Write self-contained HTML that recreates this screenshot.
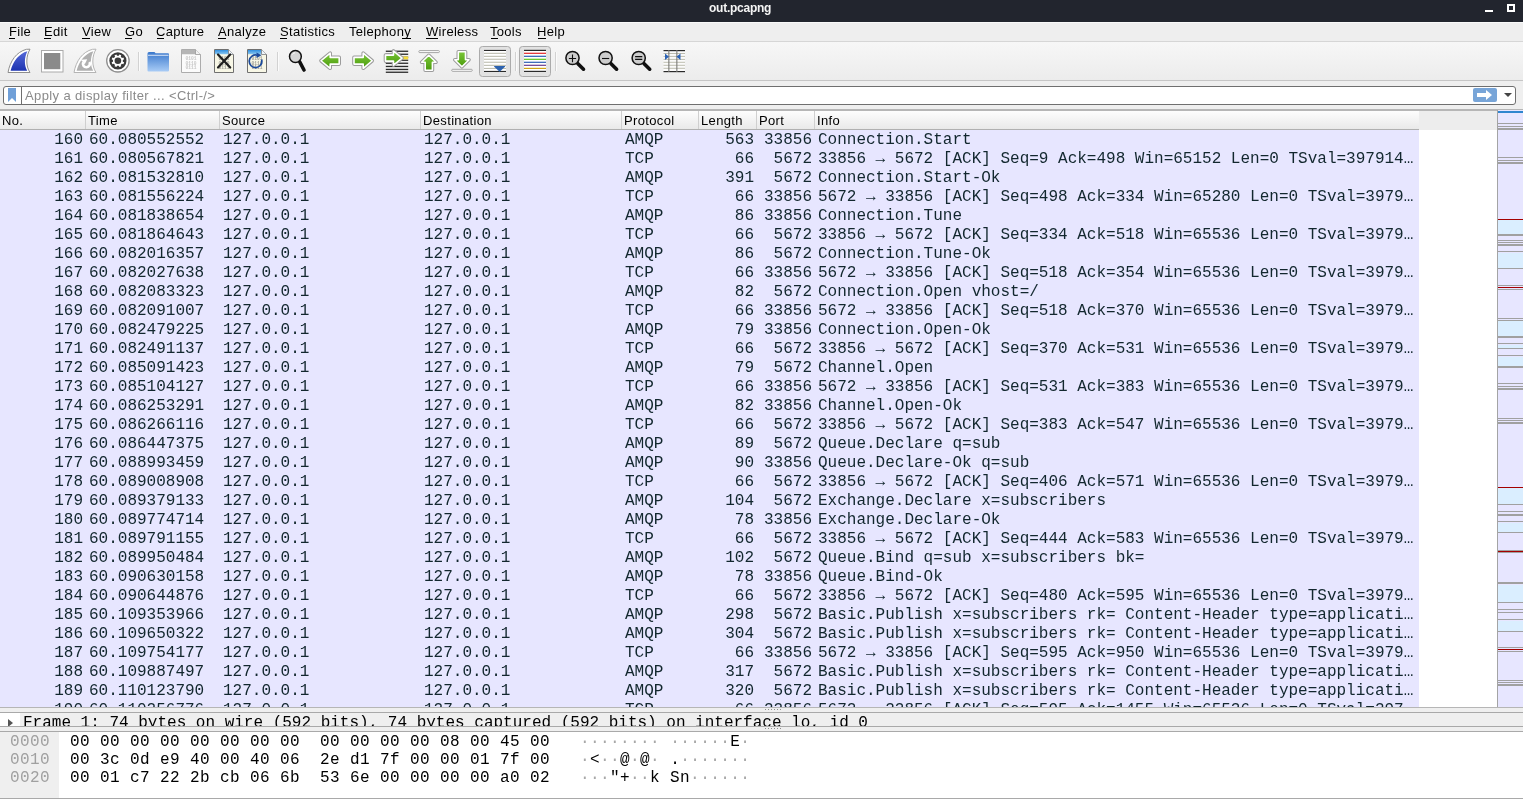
<!DOCTYPE html>
<html><head><meta charset="utf-8"><title>out.pcapng</title>
<style>
*{margin:0;padding:0;box-sizing:border-box}
html,body{width:1523px;height:799px;overflow:hidden;background:#efefef}
body{position:relative;font-family:"Liberation Sans",sans-serif;color:#000}
.a{position:absolute}
.mono{font-family:"Liberation Mono",monospace;font-size:16px;white-space:pre}
.ui{font-family:"Liberation Sans",sans-serif;font-size:13px;white-space:pre}
.menu span{position:absolute;top:0;}
.menu u{text-decoration:none;border-bottom:1px solid #000}
</style></head><body><div style="position:absolute;left:0;top:0;width:1523px;height:799px;overflow:hidden;will-change:transform">

<div class="a" style="left:0;top:0;width:1523px;height:22px;background:#22252e"></div>
<div class="a ui" style="left:709px;top:1px;font-size:12px;letter-spacing:-0.25px;font-weight:bold;color:#f4f4f4">out.pcapng</div>
<div class="a" style="left:1485px;top:10px;width:8px;height:2px;background:#fff"></div>
<div class="a" style="left:1507px;top:4px;width:8px;height:8px;border:2px solid #fff"></div>
<div class="a" style="left:0;top:22px;width:1523px;height:1px;background:#f9f9f9"></div>
<div class="a" style="left:0;top:23px;width:1523px;height:18px;background:#eeeeee"></div>
<div class="a" style="left:0;top:41px;width:1523px;height:1px;background:#d6d6d6"></div>
<div class="a ui" style="left:9px;top:24px;font-size:13px;letter-spacing:0.3px;color:#000">File</div>
<div class="a ui" style="left:44px;top:24px;font-size:13px;letter-spacing:0.3px;color:#000">Edit</div>
<div class="a ui" style="left:82px;top:24px;font-size:13px;letter-spacing:0.3px;color:#000">View</div>
<div class="a ui" style="left:125px;top:24px;font-size:13px;letter-spacing:0.3px;color:#000">Go</div>
<div class="a ui" style="left:156px;top:24px;font-size:13px;letter-spacing:0.3px;color:#000">Capture</div>
<div class="a ui" style="left:218px;top:24px;font-size:13px;letter-spacing:0.3px;color:#000">Analyze</div>
<div class="a ui" style="left:280px;top:24px;font-size:13px;letter-spacing:0.3px;color:#000">Statistics</div>
<div class="a ui" style="left:349px;top:24px;font-size:13px;letter-spacing:0.3px;color:#000">Telephony</div>
<div class="a ui" style="left:426px;top:24px;font-size:13px;letter-spacing:0.3px;color:#000">Wireless</div>
<div class="a ui" style="left:490px;top:24px;font-size:13px;letter-spacing:0.3px;color:#000">Tools</div>
<div class="a ui" style="left:537px;top:24px;font-size:13px;letter-spacing:0.3px;color:#000">Help</div>
<div class="a" style="left:9px;top:38px;width:6px;height:1px;background:#000"></div>
<div class="a" style="left:44px;top:38px;width:7px;height:1px;background:#000"></div>
<div class="a" style="left:82px;top:38px;width:8px;height:1px;background:#000"></div>
<div class="a" style="left:125px;top:38px;width:7px;height:1px;background:#000"></div>
<div class="a" style="left:157px;top:38px;width:7px;height:1px;background:#000"></div>
<div class="a" style="left:218px;top:38px;width:8px;height:1px;background:#000"></div>
<div class="a" style="left:280px;top:38px;width:7px;height:1px;background:#000"></div>
<div class="a" style="left:402px;top:38px;width:9px;height:1px;background:#000"></div>
<div class="a" style="left:426px;top:38px;width:12px;height:1px;background:#000"></div>
<div class="a" style="left:491px;top:38px;width:7px;height:1px;background:#000"></div>
<div class="a" style="left:538px;top:38px;width:8px;height:1px;background:#000"></div>
<div class="a" style="left:0;top:42px;width:1523px;height:38px;background:linear-gradient(#f7f7f7,#ececec)"></div>
<div class="a" style="left:0;top:80px;width:1523px;height:1px;background:#c6c6c6"></div>
<svg class="a" style="left:0;top:42px" width="700" height="38" viewBox="0 42 700 38">
<defs>
<linearGradient id="gblue" x1="0" y1="0" x2="0" y2="1"><stop offset="0" stop-color="#5468d8"/><stop offset="1" stop-color="#1c33b0"/></linearGradient>
<linearGradient id="gfold" x1="0" y1="0" x2="0" y2="1"><stop offset="0" stop-color="#3a78cc"/><stop offset="1" stop-color="#a9ccf6"/></linearGradient>
<linearGradient id="ggreen" x1="0" y1="0" x2="0" y2="1"><stop offset="0" stop-color="#7cc83a"/><stop offset="1" stop-color="#4a9a0c"/></linearGradient>
<linearGradient id="gdocb" x1="0" y1="0" x2="0" y2="1"><stop offset="0" stop-color="#2e8ee0"/><stop offset="1" stop-color="#8cc8f0"/></linearGradient>
</defs>
<path d="M8 72.5C10 61 16.5 51.8 26.5 49.3L30 49.2C26 56 25.5 66 30 72.5Z" fill="#fff" stroke="#8e8e8e" stroke-width="1"/>
<path d="M10.6 70.8C13 61.5 19 53.5 27.4 51.3C24.2 58 24 65 27.2 70.8Z" fill="url(#gblue)"/>
<rect x="41.5" y="50.5" width="21.5" height="21.5" fill="#fff" stroke="#aaa" stroke-width="1"/>
<rect x="44" y="53" width="16.3" height="16.2" fill="#8a8a8a"/>
<path d="M74 72.5C76 61 82.5 51.8 92.5 49.3L96 49.2C92 56 91.5 66 96 72.5Z" fill="#fff" stroke="#b4b4b4" stroke-width="1"/>
<path d="M76.6 70.8C79 61.5 85 53.5 93.4 51.3C90.2 58 90 65 93.2 70.8Z" fill="#b0b0b0"/>
<path d="M83.2 62.3A3.5 3.5 0 1 0 89.4 62.0" fill="none" stroke="#fff" stroke-width="2.6"/>
<path d="M80.8 59.7L87.2 59.3L84.8 64.3Z" fill="#fff"/>
<circle cx="117.9" cy="60.8" r="11.2" fill="#fff" stroke="#8e8e8e" stroke-width="1.3"/>
<circle cx="117.9" cy="60.8" r="8.6" fill="#3a3a3a"/>
<path d="M122.83 61.66 L124.13 62.28 L123.35 64.16 L121.99 63.68 L120.78 64.89 L121.26 66.25 L119.38 67.03 L118.76 65.73 L117.04 65.73 L116.42 67.03 L114.54 66.25 L115.02 64.89 L113.81 63.68 L112.45 64.16 L111.67 62.28 L112.97 61.66 L112.97 59.94 L111.67 59.32 L112.45 57.44 L113.81 57.92 L115.02 56.71 L114.54 55.35 L116.42 54.57 L117.04 55.87 L118.76 55.87 L119.38 54.57 L121.26 55.35 L120.78 56.71 L121.99 57.92 L123.35 57.44 L124.13 59.32 L122.83 59.94 Z" fill="#fff"/>
<circle cx="117.9" cy="60.8" r="3.3" fill="#3a3a3a"/>
<rect x="138" y="52" width="1" height="19" fill="#d2d2d2"/>
<rect x="139" y="52" width="1" height="19" fill="#fbfbfb"/>
<rect x="277" y="52" width="1" height="19" fill="#d2d2d2"/>
<rect x="278" y="52" width="1" height="19" fill="#fbfbfb"/>
<rect x="515" y="52" width="1" height="19" fill="#d2d2d2"/>
<rect x="516" y="52" width="1" height="19" fill="#fbfbfb"/>
<rect x="555" y="52" width="1" height="19" fill="#d2d2d2"/>
<rect x="556" y="52" width="1" height="19" fill="#fbfbfb"/>
<path d="M147.5 53.5Q147.5 52 149 52H154Q155 52 155.5 53.2H168Q169 53.2 169 54.5V70.5Q169 71.5 168 71.5H148.5Q147.5 71.5 147.5 70.5Z" fill="url(#gfold)"/>
<rect x="148" y="54.8" width="20.5" height="0.9" fill="#e8f0fb"/>
<path d="M181.5 49.5H195.5L200.5 54.5V72.5H181.5Z" fill="#fbfbfb" stroke="#acacac" stroke-width="1"/>
<path d="M182 50H195.3L199.5 54.3H182Z" fill="#b5b5b5"/>
<path d="M195.5 49.5V54.5H200.5" fill="#f2f2f2" stroke="#9a9a9a" stroke-width="0.8"/>
<text x="191" y="60" font-family="Liberation Mono" font-size="4.6" text-anchor="middle" font-weight="bold" fill="#c8c8c8">0101</text>
<text x="191" y="64.7" font-family="Liberation Mono" font-size="4.6" text-anchor="middle" font-weight="bold" fill="#c8c8c8">0110</text>
<text x="191" y="69.4" font-family="Liberation Mono" font-size="4.6" text-anchor="middle" font-weight="bold" fill="#c8c8c8">0111</text>
<path d="M214.5 49.5H228.5L233.5 54.5V72.5H214.5Z" fill="#f8f7e6" stroke="#707070" stroke-width="1"/>
<path d="M215 50H228.3L232.5 54.3H215Z" fill="url(#gdocb)"/>
<path d="M228.5 49.5V54.5H233.5" fill="#eef4fa" stroke="#808080" stroke-width="0.8"/>
<text x="224" y="60" font-family="Liberation Mono" font-size="4.6" text-anchor="middle" font-weight="bold" fill="#a0a098">0101</text>
<text x="224" y="64.7" font-family="Liberation Mono" font-size="4.6" text-anchor="middle" font-weight="bold" fill="#a0a098">0110</text>
<text x="224" y="69.4" font-family="Liberation Mono" font-size="4.6" text-anchor="middle" font-weight="bold" fill="#a0a098">0111</text>
<path d="M218 54.5L230.2 67.5M230.2 54.5L218 67.5" stroke="#1e1e1e" stroke-width="2.2" stroke-linecap="round"/>
<path d="M247.5 49.5H261.5L266.5 54.5V72.5H247.5Z" fill="#f8f7e6" stroke="#707070" stroke-width="1"/>
<path d="M248 50H261.3L265.5 54.3H248Z" fill="url(#gdocb)"/>
<path d="M261.5 49.5V54.5H266.5" fill="#eef4fa" stroke="#808080" stroke-width="0.8"/>
<text x="257" y="60" font-family="Liberation Mono" font-size="4.6" text-anchor="middle" font-weight="bold" fill="#a0a098">0101</text>
<text x="257" y="64.7" font-family="Liberation Mono" font-size="4.6" text-anchor="middle" font-weight="bold" fill="#a0a098">0110</text>
<text x="257" y="69.4" font-family="Liberation Mono" font-size="4.6" text-anchor="middle" font-weight="bold" fill="#a0a098">0111</text>
<path d="M261.6 59.6A6.3 6.3 0 1 1 257.2 55.2" fill="none" stroke="#1b4a9c" stroke-width="1.7"/>
<path d="M256.5 52.6L261.5 55.3L256.5 58Z" fill="#1b4a9c"/>
<line x1="299.8" y1="62" x2="304" y2="70" stroke="#111" stroke-width="3.6" stroke-linecap="round"/>
<circle cx="295.4" cy="56.5" r="5.9" fill="#d6d6d6" stroke="#111" stroke-width="1.5"/>
<path d="M292.5 54.5A3 3 0 0 1 295 52.8" fill="none" stroke="#fff" stroke-width="0.9"/>
<path d="M321.0 60.75L330.2 53.2V57.4H339.2 V64.1H330.2 V68.3Z" fill="none" stroke="#9c9c9c" stroke-width="3.6" stroke-linejoin="round"/>
<path d="M321.0 60.75L330.2 53.2V57.4H339.2 V64.1H330.2 V68.3Z" fill="url(#ggreen)" stroke="#fff" stroke-width="1.6" stroke-linejoin="round"/>
<path d="M372.2 60.75L363.2 53.2V57.4H354.0 V64.1H363.2 V68.3Z" fill="none" stroke="#9c9c9c" stroke-width="3.6" stroke-linejoin="round"/>
<path d="M372.2 60.75L363.2 53.2V57.4H354.0 V64.1H363.2 V68.3Z" fill="url(#ggreen)" stroke="#fff" stroke-width="1.6" stroke-linejoin="round"/>
<rect x="385.8" y="50.6" width="22.4" height="1.3" fill="#2b2b2b"/>
<rect x="385.8" y="53.6" width="22.4" height="1.3" fill="#2b2b2b"/>
<rect x="385.8" y="56.6" width="22.4" height="1.3" fill="#2b2b2b"/>
<rect x="385.8" y="59.6" width="22.4" height="1.3" fill="#2b2b2b"/>
<rect x="385.8" y="62.6" width="22.4" height="1.3" fill="#2b2b2b"/>
<rect x="385.8" y="65.8" width="22.4" height="1.3" fill="#2b2b2b"/>
<rect x="385.8" y="68.8" width="22.4" height="1.3" fill="#2b2b2b"/>
<rect x="385.8" y="71.6" width="22.4" height="1.3" fill="#2b2b2b"/>
<rect x="401" y="56.5" width="7.2" height="2.8" fill="#f5dc38"/>
<path d="M402.0 58.1L393.5 51V55.1H385.5 V61.1H393.5 V65.2Z" fill="none" stroke="#9c9c9c" stroke-width="3.6" stroke-linejoin="round"/>
<path d="M402.0 58.1L393.5 51V55.1H385.5 V61.1H393.5 V65.2Z" fill="url(#ggreen)" stroke="#fff" stroke-width="1.6" stroke-linejoin="round"/>
<rect x="418.8" y="50.6" width="20.6" height="2" rx="1" fill="#fff" stroke="#9c9c9c" stroke-width="0.9"/>
<path d="M428.8 55.3L436 62.3H432.4V70.3H425.2V62.3H421.6Z" fill="none" stroke="#9c9c9c" stroke-width="3.6" stroke-linejoin="round"/>
<path d="M428.8 55.3L436 62.3H432.4V70.3H425.2V62.3H421.6Z" fill="url(#ggreen)" stroke="#fff" stroke-width="1.6" stroke-linejoin="round"/>
<rect x="451.7" y="69.3" width="20.6" height="2" rx="1" fill="#fff" stroke="#9c9c9c" stroke-width="0.9"/>
<path d="M461.9 66.8L469 59.8H465.5V51.8H458.3V59.8H454.8Z" fill="none" stroke="#9c9c9c" stroke-width="3.6" stroke-linejoin="round"/>
<path d="M461.9 66.8L469 59.8H465.5V51.8H458.3V59.8H454.8Z" fill="url(#ggreen)" stroke="#fff" stroke-width="1.6" stroke-linejoin="round"/>
<rect x="479.5" y="46.5" width="31" height="30" rx="3" fill="#e2e2e2" stroke="#ababab" stroke-width="1"/>
<rect x="484" y="50" width="22" height="22" fill="#fff"/>
<rect x="484" y="49.9" width="22" height="1.1" fill="#2a2a2a"/>
<rect x="484" y="52.8" width="22" height="1.1" fill="#bdbdb0"/>
<rect x="484" y="55.8" width="22" height="1.1" fill="#bdbdb0"/>
<rect x="484" y="58.7" width="22" height="1.1" fill="#bdbdb0"/>
<rect x="484" y="61.7" width="22" height="1.1" fill="#bdbdb0"/>
<rect x="484" y="64.8" width="22" height="1.1" fill="#bdbdb0"/>
<rect x="484" y="67.9" width="22" height="1.1" fill="#bdbdb0"/>
<rect x="484" y="70.9" width="22" height="1.1" fill="#2a2a2a"/>
<path d="M494.5 66H504.8Q505.6 66 505 66.8L499.6 71.7L494.2 66.8Q493.7 66 494.5 66Z" fill="#2d62ae"/>
<rect x="519.5" y="46.5" width="31" height="30" rx="3" fill="#e2e2e2" stroke="#ababab" stroke-width="1"/>
<rect x="524" y="50" width="22" height="22" fill="#fff"/>
<rect x="524" y="49.8" width="22" height="1.2" fill="#2a2a2a"/>
<rect x="524" y="52.7" width="22" height="1.2" fill="#e3262a"/>
<rect x="524" y="55.7" width="22" height="1.2" fill="#2c5eb3"/>
<rect x="524" y="58.7" width="22" height="1.2" fill="#5cc21a"/>
<rect x="524" y="61.7" width="22" height="1.2" fill="#2c5eb3"/>
<rect x="524" y="64.7" width="22" height="1.2" fill="#6b3a8e"/>
<rect x="524" y="67.8" width="22" height="1.2" fill="#d1a212"/>
<rect x="524" y="70.8" width="22" height="1.2" fill="#2a2a2a"/>
<line x1="577.7" y1="63.5" x2="583.5" y2="69.2" stroke="#111" stroke-width="3.6" stroke-linecap="round"/>
<circle cx="572.5" cy="58" r="6.6" fill="#cdcdcd" stroke="#111" stroke-width="1.5"/>
<path d="M568.9 58.5H576.1M572.5 54.5V62.2" stroke="#111" stroke-width="1.1"/>
<line x1="610.8" y1="63.5" x2="616.6" y2="69.2" stroke="#111" stroke-width="3.6" stroke-linecap="round"/>
<circle cx="605.6" cy="58" r="6.6" fill="#cdcdcd" stroke="#111" stroke-width="1.5"/>
<path d="M602.0 58.5H609.2" stroke="#111" stroke-width="1.1"/>
<line x1="643.9" y1="63.5" x2="649.7" y2="69.2" stroke="#111" stroke-width="3.6" stroke-linecap="round"/>
<circle cx="638.7" cy="58" r="6.6" fill="#cdcdcd" stroke="#111" stroke-width="1.5"/>
<path d="M635.1 56.6H642.3M635.1 59.4H642.3" stroke="#111" stroke-width="1.2"/>
<rect x="663.5" y="50" width="21.5" height="22" fill="#fbfbfb"/>
<rect x="663.5" y="53.0" width="21.5" height="1" fill="#bdbdb0"/>
<rect x="663.5" y="55.9" width="21.5" height="1" fill="#bdbdb0"/>
<rect x="663.5" y="58.9" width="21.5" height="1" fill="#bdbdb0"/>
<rect x="663.5" y="61.8" width="21.5" height="1" fill="#bdbdb0"/>
<rect x="663.5" y="64.8" width="21.5" height="1" fill="#bdbdb0"/>
<rect x="663.5" y="67.8" width="21.5" height="1" fill="#bdbdb0"/>
<rect x="663.5" y="50" width="21.5" height="1.2" fill="#2a2a2a"/>
<rect x="663.5" y="71" width="21.5" height="1.2" fill="#2a2a2a"/>
<rect x="668.3" y="50" width="1.1" height="22" fill="#7c7c78"/>
<rect x="676.3" y="50" width="1.1" height="22" fill="#7c7c78"/>
<path d="M665 53.5L669 56.8L665 60.1Z" fill="#2c62b4"/>
<path d="M680.5 53.5L676.5 56.8L680.5 60.1Z" fill="#2c62b4"/>
</svg>
<div class="a" style="left:0;top:81px;width:1523px;height:28px;background:#efefef"></div>
<div class="a" style="left:3px;top:86px;width:1513px;height:19px;background:#fff;border:1px solid #6f6f6f;border-radius:3px"></div>
<div class="a" style="left:21px;top:87px;width:1px;height:17px;background:#6f6f6f"></div>
<svg class="a" style="left:7px;top:88px" width="10" height="14" viewBox="0 0 10 14"><path d="M1 0H9V14L5 10L1 14Z" fill="#6f9fd8"/></svg>
<div class="a ui" style="left:25px;top:88px;font-size:13px;letter-spacing:0.38px;color:#8a8a8a">Apply a display filter ... &lt;Ctrl-/&gt;</div>
<div class="a" style="left:1473px;top:88px;width:24px;height:14px;background:#78a5d8;border-radius:2px"></div>
<svg class="a" style="left:1476px;top:89px" width="18" height="12" viewBox="0 0 18 12"><path d="M1 4H10V1L16 6L10 11V8H1Z" fill="#fff"/></svg>
<svg class="a" style="left:1504px;top:93px" width="8" height="4" viewBox="0 0 8 4"><path d="M0 0H8L4 4Z" fill="#444"/></svg>
<div class="a" style="left:0;top:109px;width:1523px;height:2px;background:#b6b6b6"></div>
<div class="a" style="left:0;top:111px;width:1419px;height:18px;background:linear-gradient(#fdfdfd,#e9e9e9)"></div>
<div class="a" style="left:1419px;top:111px;width:78px;height:19px;background:#ededed"></div>
<div class="a" style="left:0;top:129px;width:1419px;height:1px;background:#b0b0b0"></div>
<div class="a" style="left:85px;top:111px;width:1px;height:18px;background:#cfcfcf"></div>
<div class="a" style="left:219px;top:111px;width:1px;height:18px;background:#cfcfcf"></div>
<div class="a" style="left:420px;top:111px;width:1px;height:18px;background:#cfcfcf"></div>
<div class="a" style="left:621px;top:111px;width:1px;height:18px;background:#cfcfcf"></div>
<div class="a" style="left:698px;top:111px;width:1px;height:18px;background:#cfcfcf"></div>
<div class="a" style="left:756px;top:111px;width:1px;height:18px;background:#cfcfcf"></div>
<div class="a" style="left:814px;top:111px;width:1px;height:18px;background:#cfcfcf"></div>
<div class="a ui" style="left:2px;top:113px;font-size:13px;letter-spacing:0.35px;color:#000">No.</div>
<div class="a ui" style="left:88px;top:113px;font-size:13px;letter-spacing:0.35px;color:#000">Time</div>
<div class="a ui" style="left:222px;top:113px;font-size:13px;letter-spacing:0.35px;color:#000">Source</div>
<div class="a ui" style="left:423px;top:113px;font-size:13px;letter-spacing:0.35px;color:#000">Destination</div>
<div class="a ui" style="left:624px;top:113px;font-size:13px;letter-spacing:0.35px;color:#000">Protocol</div>
<div class="a ui" style="left:701px;top:113px;font-size:13px;letter-spacing:0.35px;color:#000">Length</div>
<div class="a ui" style="left:759px;top:113px;font-size:13px;letter-spacing:0.35px;color:#000">Port</div>
<div class="a ui" style="left:817px;top:113px;font-size:13px;letter-spacing:0.35px;color:#000">Info</div>
<div class="a" style="left:0;top:130px;width:1497px;height:577px;background:#fff"></div>
<div class="a" style="left:0;top:130px;width:1419px;height:577px;background:#e7e6ff"></div>
<div class="a mono" style="left:0;top:131px;width:1419px;height:576px;overflow:hidden;color:#12272e;line-height:19px">
<div class="a" style="top:0px;right:1336px">160</div>
<div class="a" style="top:0px;left:89px">60.080552552</div>
<div class="a" style="top:0px;left:223px">127.0.0.1</div>
<div class="a" style="top:0px;left:424px">127.0.0.1</div>
<div class="a" style="top:0px;left:625px">AMQP</div>
<div class="a" style="top:0px;right:665px">563</div>
<div class="a" style="top:0px;right:607px">33856</div>
<div class="a" style="top:0px;left:818px">Connection.Start</div>
<div class="a" style="top:19px;right:1336px">161</div>
<div class="a" style="top:19px;left:89px">60.080567821</div>
<div class="a" style="top:19px;left:223px">127.0.0.1</div>
<div class="a" style="top:19px;left:424px">127.0.0.1</div>
<div class="a" style="top:19px;left:625px">TCP</div>
<div class="a" style="top:19px;right:665px">66</div>
<div class="a" style="top:19px;right:607px">5672</div>
<div class="a" style="top:19px;left:818px">33856 → 5672 [ACK] Seq=9 Ack=498 Win=65152 Len=0 TSval=397914…</div>
<div class="a" style="top:38px;right:1336px">162</div>
<div class="a" style="top:38px;left:89px">60.081532810</div>
<div class="a" style="top:38px;left:223px">127.0.0.1</div>
<div class="a" style="top:38px;left:424px">127.0.0.1</div>
<div class="a" style="top:38px;left:625px">AMQP</div>
<div class="a" style="top:38px;right:665px">391</div>
<div class="a" style="top:38px;right:607px">5672</div>
<div class="a" style="top:38px;left:818px">Connection.Start-Ok</div>
<div class="a" style="top:57px;right:1336px">163</div>
<div class="a" style="top:57px;left:89px">60.081556224</div>
<div class="a" style="top:57px;left:223px">127.0.0.1</div>
<div class="a" style="top:57px;left:424px">127.0.0.1</div>
<div class="a" style="top:57px;left:625px">TCP</div>
<div class="a" style="top:57px;right:665px">66</div>
<div class="a" style="top:57px;right:607px">33856</div>
<div class="a" style="top:57px;left:818px">5672 → 33856 [ACK] Seq=498 Ack=334 Win=65280 Len=0 TSval=3979…</div>
<div class="a" style="top:76px;right:1336px">164</div>
<div class="a" style="top:76px;left:89px">60.081838654</div>
<div class="a" style="top:76px;left:223px">127.0.0.1</div>
<div class="a" style="top:76px;left:424px">127.0.0.1</div>
<div class="a" style="top:76px;left:625px">AMQP</div>
<div class="a" style="top:76px;right:665px">86</div>
<div class="a" style="top:76px;right:607px">33856</div>
<div class="a" style="top:76px;left:818px">Connection.Tune</div>
<div class="a" style="top:95px;right:1336px">165</div>
<div class="a" style="top:95px;left:89px">60.081864643</div>
<div class="a" style="top:95px;left:223px">127.0.0.1</div>
<div class="a" style="top:95px;left:424px">127.0.0.1</div>
<div class="a" style="top:95px;left:625px">TCP</div>
<div class="a" style="top:95px;right:665px">66</div>
<div class="a" style="top:95px;right:607px">5672</div>
<div class="a" style="top:95px;left:818px">33856 → 5672 [ACK] Seq=334 Ack=518 Win=65536 Len=0 TSval=3979…</div>
<div class="a" style="top:114px;right:1336px">166</div>
<div class="a" style="top:114px;left:89px">60.082016357</div>
<div class="a" style="top:114px;left:223px">127.0.0.1</div>
<div class="a" style="top:114px;left:424px">127.0.0.1</div>
<div class="a" style="top:114px;left:625px">AMQP</div>
<div class="a" style="top:114px;right:665px">86</div>
<div class="a" style="top:114px;right:607px">5672</div>
<div class="a" style="top:114px;left:818px">Connection.Tune-Ok</div>
<div class="a" style="top:133px;right:1336px">167</div>
<div class="a" style="top:133px;left:89px">60.082027638</div>
<div class="a" style="top:133px;left:223px">127.0.0.1</div>
<div class="a" style="top:133px;left:424px">127.0.0.1</div>
<div class="a" style="top:133px;left:625px">TCP</div>
<div class="a" style="top:133px;right:665px">66</div>
<div class="a" style="top:133px;right:607px">33856</div>
<div class="a" style="top:133px;left:818px">5672 → 33856 [ACK] Seq=518 Ack=354 Win=65536 Len=0 TSval=3979…</div>
<div class="a" style="top:152px;right:1336px">168</div>
<div class="a" style="top:152px;left:89px">60.082083323</div>
<div class="a" style="top:152px;left:223px">127.0.0.1</div>
<div class="a" style="top:152px;left:424px">127.0.0.1</div>
<div class="a" style="top:152px;left:625px">AMQP</div>
<div class="a" style="top:152px;right:665px">82</div>
<div class="a" style="top:152px;right:607px">5672</div>
<div class="a" style="top:152px;left:818px">Connection.Open vhost=/</div>
<div class="a" style="top:171px;right:1336px">169</div>
<div class="a" style="top:171px;left:89px">60.082091007</div>
<div class="a" style="top:171px;left:223px">127.0.0.1</div>
<div class="a" style="top:171px;left:424px">127.0.0.1</div>
<div class="a" style="top:171px;left:625px">TCP</div>
<div class="a" style="top:171px;right:665px">66</div>
<div class="a" style="top:171px;right:607px">33856</div>
<div class="a" style="top:171px;left:818px">5672 → 33856 [ACK] Seq=518 Ack=370 Win=65536 Len=0 TSval=3979…</div>
<div class="a" style="top:190px;right:1336px">170</div>
<div class="a" style="top:190px;left:89px">60.082479225</div>
<div class="a" style="top:190px;left:223px">127.0.0.1</div>
<div class="a" style="top:190px;left:424px">127.0.0.1</div>
<div class="a" style="top:190px;left:625px">AMQP</div>
<div class="a" style="top:190px;right:665px">79</div>
<div class="a" style="top:190px;right:607px">33856</div>
<div class="a" style="top:190px;left:818px">Connection.Open-Ok</div>
<div class="a" style="top:209px;right:1336px">171</div>
<div class="a" style="top:209px;left:89px">60.082491137</div>
<div class="a" style="top:209px;left:223px">127.0.0.1</div>
<div class="a" style="top:209px;left:424px">127.0.0.1</div>
<div class="a" style="top:209px;left:625px">TCP</div>
<div class="a" style="top:209px;right:665px">66</div>
<div class="a" style="top:209px;right:607px">5672</div>
<div class="a" style="top:209px;left:818px">33856 → 5672 [ACK] Seq=370 Ack=531 Win=65536 Len=0 TSval=3979…</div>
<div class="a" style="top:228px;right:1336px">172</div>
<div class="a" style="top:228px;left:89px">60.085091423</div>
<div class="a" style="top:228px;left:223px">127.0.0.1</div>
<div class="a" style="top:228px;left:424px">127.0.0.1</div>
<div class="a" style="top:228px;left:625px">AMQP</div>
<div class="a" style="top:228px;right:665px">79</div>
<div class="a" style="top:228px;right:607px">5672</div>
<div class="a" style="top:228px;left:818px">Channel.Open</div>
<div class="a" style="top:247px;right:1336px">173</div>
<div class="a" style="top:247px;left:89px">60.085104127</div>
<div class="a" style="top:247px;left:223px">127.0.0.1</div>
<div class="a" style="top:247px;left:424px">127.0.0.1</div>
<div class="a" style="top:247px;left:625px">TCP</div>
<div class="a" style="top:247px;right:665px">66</div>
<div class="a" style="top:247px;right:607px">33856</div>
<div class="a" style="top:247px;left:818px">5672 → 33856 [ACK] Seq=531 Ack=383 Win=65536 Len=0 TSval=3979…</div>
<div class="a" style="top:266px;right:1336px">174</div>
<div class="a" style="top:266px;left:89px">60.086253291</div>
<div class="a" style="top:266px;left:223px">127.0.0.1</div>
<div class="a" style="top:266px;left:424px">127.0.0.1</div>
<div class="a" style="top:266px;left:625px">AMQP</div>
<div class="a" style="top:266px;right:665px">82</div>
<div class="a" style="top:266px;right:607px">33856</div>
<div class="a" style="top:266px;left:818px">Channel.Open-Ok</div>
<div class="a" style="top:285px;right:1336px">175</div>
<div class="a" style="top:285px;left:89px">60.086266116</div>
<div class="a" style="top:285px;left:223px">127.0.0.1</div>
<div class="a" style="top:285px;left:424px">127.0.0.1</div>
<div class="a" style="top:285px;left:625px">TCP</div>
<div class="a" style="top:285px;right:665px">66</div>
<div class="a" style="top:285px;right:607px">5672</div>
<div class="a" style="top:285px;left:818px">33856 → 5672 [ACK] Seq=383 Ack=547 Win=65536 Len=0 TSval=3979…</div>
<div class="a" style="top:304px;right:1336px">176</div>
<div class="a" style="top:304px;left:89px">60.086447375</div>
<div class="a" style="top:304px;left:223px">127.0.0.1</div>
<div class="a" style="top:304px;left:424px">127.0.0.1</div>
<div class="a" style="top:304px;left:625px">AMQP</div>
<div class="a" style="top:304px;right:665px">89</div>
<div class="a" style="top:304px;right:607px">5672</div>
<div class="a" style="top:304px;left:818px">Queue.Declare q=sub</div>
<div class="a" style="top:323px;right:1336px">177</div>
<div class="a" style="top:323px;left:89px">60.088993459</div>
<div class="a" style="top:323px;left:223px">127.0.0.1</div>
<div class="a" style="top:323px;left:424px">127.0.0.1</div>
<div class="a" style="top:323px;left:625px">AMQP</div>
<div class="a" style="top:323px;right:665px">90</div>
<div class="a" style="top:323px;right:607px">33856</div>
<div class="a" style="top:323px;left:818px">Queue.Declare-Ok q=sub</div>
<div class="a" style="top:342px;right:1336px">178</div>
<div class="a" style="top:342px;left:89px">60.089008908</div>
<div class="a" style="top:342px;left:223px">127.0.0.1</div>
<div class="a" style="top:342px;left:424px">127.0.0.1</div>
<div class="a" style="top:342px;left:625px">TCP</div>
<div class="a" style="top:342px;right:665px">66</div>
<div class="a" style="top:342px;right:607px">5672</div>
<div class="a" style="top:342px;left:818px">33856 → 5672 [ACK] Seq=406 Ack=571 Win=65536 Len=0 TSval=3979…</div>
<div class="a" style="top:361px;right:1336px">179</div>
<div class="a" style="top:361px;left:89px">60.089379133</div>
<div class="a" style="top:361px;left:223px">127.0.0.1</div>
<div class="a" style="top:361px;left:424px">127.0.0.1</div>
<div class="a" style="top:361px;left:625px">AMQP</div>
<div class="a" style="top:361px;right:665px">104</div>
<div class="a" style="top:361px;right:607px">5672</div>
<div class="a" style="top:361px;left:818px">Exchange.Declare x=subscribers</div>
<div class="a" style="top:380px;right:1336px">180</div>
<div class="a" style="top:380px;left:89px">60.089774714</div>
<div class="a" style="top:380px;left:223px">127.0.0.1</div>
<div class="a" style="top:380px;left:424px">127.0.0.1</div>
<div class="a" style="top:380px;left:625px">AMQP</div>
<div class="a" style="top:380px;right:665px">78</div>
<div class="a" style="top:380px;right:607px">33856</div>
<div class="a" style="top:380px;left:818px">Exchange.Declare-Ok</div>
<div class="a" style="top:399px;right:1336px">181</div>
<div class="a" style="top:399px;left:89px">60.089791155</div>
<div class="a" style="top:399px;left:223px">127.0.0.1</div>
<div class="a" style="top:399px;left:424px">127.0.0.1</div>
<div class="a" style="top:399px;left:625px">TCP</div>
<div class="a" style="top:399px;right:665px">66</div>
<div class="a" style="top:399px;right:607px">5672</div>
<div class="a" style="top:399px;left:818px">33856 → 5672 [ACK] Seq=444 Ack=583 Win=65536 Len=0 TSval=3979…</div>
<div class="a" style="top:418px;right:1336px">182</div>
<div class="a" style="top:418px;left:89px">60.089950484</div>
<div class="a" style="top:418px;left:223px">127.0.0.1</div>
<div class="a" style="top:418px;left:424px">127.0.0.1</div>
<div class="a" style="top:418px;left:625px">AMQP</div>
<div class="a" style="top:418px;right:665px">102</div>
<div class="a" style="top:418px;right:607px">5672</div>
<div class="a" style="top:418px;left:818px">Queue.Bind q=sub x=subscribers bk=</div>
<div class="a" style="top:437px;right:1336px">183</div>
<div class="a" style="top:437px;left:89px">60.090630158</div>
<div class="a" style="top:437px;left:223px">127.0.0.1</div>
<div class="a" style="top:437px;left:424px">127.0.0.1</div>
<div class="a" style="top:437px;left:625px">AMQP</div>
<div class="a" style="top:437px;right:665px">78</div>
<div class="a" style="top:437px;right:607px">33856</div>
<div class="a" style="top:437px;left:818px">Queue.Bind-Ok</div>
<div class="a" style="top:456px;right:1336px">184</div>
<div class="a" style="top:456px;left:89px">60.090644876</div>
<div class="a" style="top:456px;left:223px">127.0.0.1</div>
<div class="a" style="top:456px;left:424px">127.0.0.1</div>
<div class="a" style="top:456px;left:625px">TCP</div>
<div class="a" style="top:456px;right:665px">66</div>
<div class="a" style="top:456px;right:607px">5672</div>
<div class="a" style="top:456px;left:818px">33856 → 5672 [ACK] Seq=480 Ack=595 Win=65536 Len=0 TSval=3979…</div>
<div class="a" style="top:475px;right:1336px">185</div>
<div class="a" style="top:475px;left:89px">60.109353966</div>
<div class="a" style="top:475px;left:223px">127.0.0.1</div>
<div class="a" style="top:475px;left:424px">127.0.0.1</div>
<div class="a" style="top:475px;left:625px">AMQP</div>
<div class="a" style="top:475px;right:665px">298</div>
<div class="a" style="top:475px;right:607px">5672</div>
<div class="a" style="top:475px;left:818px">Basic.Publish x=subscribers rk= Content-Header type=applicati…</div>
<div class="a" style="top:494px;right:1336px">186</div>
<div class="a" style="top:494px;left:89px">60.109650322</div>
<div class="a" style="top:494px;left:223px">127.0.0.1</div>
<div class="a" style="top:494px;left:424px">127.0.0.1</div>
<div class="a" style="top:494px;left:625px">AMQP</div>
<div class="a" style="top:494px;right:665px">304</div>
<div class="a" style="top:494px;right:607px">5672</div>
<div class="a" style="top:494px;left:818px">Basic.Publish x=subscribers rk= Content-Header type=applicati…</div>
<div class="a" style="top:513px;right:1336px">187</div>
<div class="a" style="top:513px;left:89px">60.109754177</div>
<div class="a" style="top:513px;left:223px">127.0.0.1</div>
<div class="a" style="top:513px;left:424px">127.0.0.1</div>
<div class="a" style="top:513px;left:625px">TCP</div>
<div class="a" style="top:513px;right:665px">66</div>
<div class="a" style="top:513px;right:607px">33856</div>
<div class="a" style="top:513px;left:818px">5672 → 33856 [ACK] Seq=595 Ack=950 Win=65536 Len=0 TSval=3979…</div>
<div class="a" style="top:532px;right:1336px">188</div>
<div class="a" style="top:532px;left:89px">60.109887497</div>
<div class="a" style="top:532px;left:223px">127.0.0.1</div>
<div class="a" style="top:532px;left:424px">127.0.0.1</div>
<div class="a" style="top:532px;left:625px">AMQP</div>
<div class="a" style="top:532px;right:665px">317</div>
<div class="a" style="top:532px;right:607px">5672</div>
<div class="a" style="top:532px;left:818px">Basic.Publish x=subscribers rk= Content-Header type=applicati…</div>
<div class="a" style="top:551px;right:1336px">189</div>
<div class="a" style="top:551px;left:89px">60.110123790</div>
<div class="a" style="top:551px;left:223px">127.0.0.1</div>
<div class="a" style="top:551px;left:424px">127.0.0.1</div>
<div class="a" style="top:551px;left:625px">AMQP</div>
<div class="a" style="top:551px;right:665px">320</div>
<div class="a" style="top:551px;right:607px">5672</div>
<div class="a" style="top:551px;left:818px">Basic.Publish x=subscribers rk= Content-Header type=applicati…</div>
<div class="a" style="top:570px;right:1336px">190</div>
<div class="a" style="top:570px;left:89px">60.110256776</div>
<div class="a" style="top:570px;left:223px">127.0.0.1</div>
<div class="a" style="top:570px;left:424px">127.0.0.1</div>
<div class="a" style="top:570px;left:625px">TCP</div>
<div class="a" style="top:570px;right:665px">66</div>
<div class="a" style="top:570px;right:607px">33856</div>
<div class="a" style="top:570px;left:818px">5672 → 33856 [ACK] Seq=595 Ack=1455 Win=65536 Len=0 TSval=397…</div>
</div>
<div class="a" style="left:0;top:707px;width:1523px;height:1px;background:#b6b6b6"></div>
<div class="a" style="left:1497px;top:110px;width:26px;height:597px;background:#e7e6ff;overflow:hidden">
<div class="a" style="left:0;top:0;width:1px;height:597px;background:#a4a4a4"></div>
<div class="a" style="left:1px;top:1px;width:25px;height:2px;background:#2f86cf"></div>
<div class="a" style="left:1px;top:110px;width:25px;height:14px;background:#daeeff"></div>
<div class="a" style="left:1px;top:143px;width:25px;height:15px;background:#daeeff"></div>
<div class="a" style="left:1px;top:211px;width:25px;height:15px;background:#daeeff"></div>
<div class="a" style="left:1px;top:235px;width:25px;height:3px;background:#daeeff"></div>
<div class="a" style="left:1px;top:247px;width:25px;height:9px;background:#daeeff"></div>
<div class="a" style="left:1px;top:378px;width:25px;height:16px;background:#daeeff"></div>
<div class="a" style="left:1px;top:413px;width:25px;height:9px;background:#daeeff"></div>
<div class="a" style="left:1px;top:475px;width:25px;height:17px;background:#daeeff"></div>
<div class="a" style="left:1px;top:511px;width:25px;height:10px;background:#daeeff"></div>
<div class="a" style="left:1px;top:13px;width:25px;height:1px;background:#a0a0a0"></div>
<div class="a" style="left:1px;top:16px;width:25px;height:1px;background:#a0a0a0"></div>
<div class="a" style="left:1px;top:18px;width:25px;height:2px;background:#a0a0a0"></div>
<div class="a" style="left:1px;top:47px;width:25px;height:1px;background:#a0a0a0"></div>
<div class="a" style="left:1px;top:50px;width:25px;height:1px;background:#a0a0a0"></div>
<div class="a" style="left:1px;top:52px;width:25px;height:2px;background:#a0a0a0"></div>
<div class="a" style="left:1px;top:124px;width:25px;height:2px;background:#a0a0a0"></div>
<div class="a" style="left:1px;top:130px;width:25px;height:1px;background:#a0a0a0"></div>
<div class="a" style="left:1px;top:132px;width:25px;height:1px;background:#a0a0a0"></div>
<div class="a" style="left:1px;top:134px;width:25px;height:2px;background:#a0a0a0"></div>
<div class="a" style="left:1px;top:141px;width:25px;height:1px;background:#a0a0a0"></div>
<div class="a" style="left:1px;top:158px;width:25px;height:1px;background:#a0a0a0"></div>
<div class="a" style="left:1px;top:175px;width:25px;height:1px;background:#a0a0a0"></div>
<div class="a" style="left:1px;top:179px;width:25px;height:1px;background:#a0a0a0"></div>
<div class="a" style="left:1px;top:208px;width:25px;height:1px;background:#a0a0a0"></div>
<div class="a" style="left:1px;top:210px;width:25px;height:1px;background:#a0a0a0"></div>
<div class="a" style="left:1px;top:226px;width:25px;height:2px;background:#a0a0a0"></div>
<div class="a" style="left:1px;top:233px;width:25px;height:1px;background:#a0a0a0"></div>
<div class="a" style="left:1px;top:238px;width:25px;height:1px;background:#a0a0a0"></div>
<div class="a" style="left:1px;top:245px;width:25px;height:1px;background:#a0a0a0"></div>
<div class="a" style="left:1px;top:256px;width:25px;height:2px;background:#a0a0a0"></div>
<div class="a" style="left:1px;top:273px;width:25px;height:1px;background:#a0a0a0"></div>
<div class="a" style="left:1px;top:276px;width:25px;height:1px;background:#a0a0a0"></div>
<div class="a" style="left:1px;top:278px;width:25px;height:2px;background:#a0a0a0"></div>
<div class="a" style="left:1px;top:308px;width:25px;height:1px;background:#a0a0a0"></div>
<div class="a" style="left:1px;top:310px;width:25px;height:1px;background:#a0a0a0"></div>
<div class="a" style="left:1px;top:312px;width:25px;height:2px;background:#a0a0a0"></div>
<div class="a" style="left:1px;top:394px;width:25px;height:1px;background:#a0a0a0"></div>
<div class="a" style="left:1px;top:401px;width:25px;height:1px;background:#a0a0a0"></div>
<div class="a" style="left:1px;top:404px;width:25px;height:2px;background:#a0a0a0"></div>
<div class="a" style="left:1px;top:411px;width:25px;height:1px;background:#a0a0a0"></div>
<div class="a" style="left:1px;top:422px;width:25px;height:1px;background:#a0a0a0"></div>
<div class="a" style="left:1px;top:440px;width:25px;height:1px;background:#a0a0a0"></div>
<div class="a" style="left:1px;top:442px;width:25px;height:1px;background:#a0a0a0"></div>
<div class="a" style="left:1px;top:472px;width:25px;height:1px;background:#a0a0a0"></div>
<div class="a" style="left:1px;top:473px;width:25px;height:1px;background:#a0a0a0"></div>
<div class="a" style="left:1px;top:492px;width:25px;height:1px;background:#a0a0a0"></div>
<div class="a" style="left:1px;top:499px;width:25px;height:1px;background:#a0a0a0"></div>
<div class="a" style="left:1px;top:502px;width:25px;height:1px;background:#a0a0a0"></div>
<div class="a" style="left:1px;top:509px;width:25px;height:1px;background:#a0a0a0"></div>
<div class="a" style="left:1px;top:521px;width:25px;height:1px;background:#a0a0a0"></div>
<div class="a" style="left:1px;top:537px;width:25px;height:1px;background:#a0a0a0"></div>
<div class="a" style="left:1px;top:541px;width:25px;height:1px;background:#a0a0a0"></div>
<div class="a" style="left:1px;top:570px;width:25px;height:1px;background:#a0a0a0"></div>
<div class="a" style="left:1px;top:572px;width:25px;height:1px;background:#a0a0a0"></div>
<div class="a" style="left:1px;top:574px;width:25px;height:2px;background:#a0a0a0"></div>
<div class="a" style="left:1px;top:109px;width:25px;height:1px;background:#a40000"></div>
<div class="a" style="left:1px;top:177px;width:25px;height:1px;background:#a40000"></div>
<div class="a" style="left:1px;top:377px;width:25px;height:1px;background:#a40000"></div>
<div class="a" style="left:1px;top:441px;width:25px;height:1px;background:#a40000"></div>
<div class="a" style="left:1px;top:539px;width:25px;height:1px;background:#a40000"></div>
</div>
<div class="a" style="left:0;top:708px;width:1523px;height:4px;background:#efefef"></div>
<div class="a" style="left:0;top:712px;width:1523px;height:1px;background:#a9a9a9"></div>
<div class="a" style="left:0;top:713px;width:1523px;height:13px;background:#fff;overflow:hidden">
<div class="a" style="left:20px;top:0;width:1503px;height:13px;background:#efefef"></div>
<svg class="a" style="left:8px;top:6px" width="5" height="8" viewBox="0 0 5 8"><path d="M0 0L5 4L0 8Z" fill="#555"/></svg>
<div class="a mono" style="left:23px;top:1px;line-height:19px;color:#000">Frame 1: 74 bytes on wire (592 bits), 74 bytes captured (592 bits) on interface lo, id 0</div>
</div>
<div class="a" style="left:0;top:726px;width:1523px;height:1px;background:#a9a9a9"></div>
<div class="a" style="left:0;top:727px;width:1523px;height:4px;background:#efefef"></div>
<div class="a" style="left:0;top:731px;width:1523px;height:1px;background:#a9a9a9"></div>
<div class="a" style="left:0;top:732px;width:1523px;height:66px;background:#fff"></div>
<div class="a" style="left:0;top:732px;width:59px;height:66px;background:#efefef"></div>
<div class="a" style="left:0;top:798px;width:1523px;height:1px;background:#a9a9a9"></div>
<div class="a mono" style="left:10px;top:733px;line-height:18px;letter-spacing:0.4px;color:#a0a0a0">0000</div>
<div class="a mono" style="left:70px;top:733px;line-height:18px;letter-spacing:0.4px;color:#000">00 00 00 00 00 00 00 00  00 00 00 00 08 00 45 00</div>
<div class="a mono" style="left:580px;top:733px;line-height:18px;letter-spacing:0.4px;color:#000"><span style="color:#a8a8a8">·</span><span style="color:#a8a8a8">·</span><span style="color:#a8a8a8">·</span><span style="color:#a8a8a8">·</span><span style="color:#a8a8a8">·</span><span style="color:#a8a8a8">·</span><span style="color:#a8a8a8">·</span><span style="color:#a8a8a8">·</span> <span style="color:#a8a8a8">·</span><span style="color:#a8a8a8">·</span><span style="color:#a8a8a8">·</span><span style="color:#a8a8a8">·</span><span style="color:#a8a8a8">·</span><span style="color:#a8a8a8">·</span>E<span style="color:#a8a8a8">·</span></div>
<div class="a mono" style="left:10px;top:751px;line-height:18px;letter-spacing:0.4px;color:#a0a0a0">0010</div>
<div class="a mono" style="left:70px;top:751px;line-height:18px;letter-spacing:0.4px;color:#000">00 3c 0d e9 40 00 40 06  2e d1 7f 00 00 01 7f 00</div>
<div class="a mono" style="left:580px;top:751px;line-height:18px;letter-spacing:0.4px;color:#000"><span style="color:#a8a8a8">·</span>&lt;<span style="color:#a8a8a8">·</span><span style="color:#a8a8a8">·</span>@<span style="color:#a8a8a8">·</span>@<span style="color:#a8a8a8">·</span> .<span style="color:#a8a8a8">·</span><span style="color:#a8a8a8">·</span><span style="color:#a8a8a8">·</span><span style="color:#a8a8a8">·</span><span style="color:#a8a8a8">·</span><span style="color:#a8a8a8">·</span><span style="color:#a8a8a8">·</span></div>
<div class="a mono" style="left:10px;top:769px;line-height:18px;letter-spacing:0.4px;color:#a0a0a0">0020</div>
<div class="a mono" style="left:70px;top:769px;line-height:18px;letter-spacing:0.4px;color:#000">00 01 c7 22 2b cb 06 6b  53 6e 00 00 00 00 a0 02</div>
<div class="a mono" style="left:580px;top:769px;line-height:18px;letter-spacing:0.4px;color:#000"><span style="color:#a8a8a8">·</span><span style="color:#a8a8a8">·</span><span style="color:#a8a8a8">·</span>&quot;+<span style="color:#a8a8a8">·</span><span style="color:#a8a8a8">·</span>k Sn<span style="color:#a8a8a8">·</span><span style="color:#a8a8a8">·</span><span style="color:#a8a8a8">·</span><span style="color:#a8a8a8">·</span><span style="color:#a8a8a8">·</span><span style="color:#a8a8a8">·</span></div>
<div class="a" style="left:765px;top:709px;width:1px;height:1px;background:#8e8e8e"></div>
<div class="a" style="left:765px;top:728px;width:1px;height:1px;background:#8e8e8e"></div>
<div class="a" style="left:768px;top:709px;width:1px;height:1px;background:#8e8e8e"></div>
<div class="a" style="left:768px;top:728px;width:1px;height:1px;background:#8e8e8e"></div>
<div class="a" style="left:771px;top:709px;width:1px;height:1px;background:#8e8e8e"></div>
<div class="a" style="left:771px;top:728px;width:1px;height:1px;background:#8e8e8e"></div>
<div class="a" style="left:774px;top:709px;width:1px;height:1px;background:#8e8e8e"></div>
<div class="a" style="left:774px;top:728px;width:1px;height:1px;background:#8e8e8e"></div>
<div class="a" style="left:777px;top:709px;width:1px;height:1px;background:#8e8e8e"></div>
<div class="a" style="left:777px;top:728px;width:1px;height:1px;background:#8e8e8e"></div>
<div class="a" style="left:780px;top:709px;width:1px;height:1px;background:#8e8e8e"></div>
<div class="a" style="left:780px;top:728px;width:1px;height:1px;background:#8e8e8e"></div>
</div></body></html>
